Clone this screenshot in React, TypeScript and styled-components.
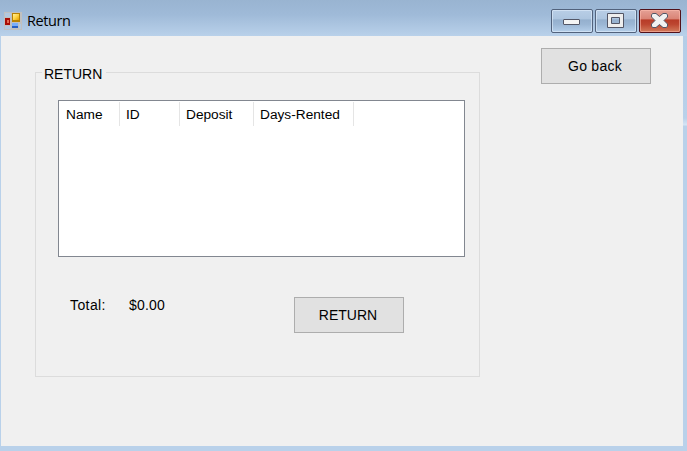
import React from "react";
import styled, { createGlobalStyle } from "styled-components";

const GlobalStyle = createGlobalStyle`
  html, body { margin: 0; padding: 0; }
  body { overflow: hidden; }
  *, *::before, *::after { box-sizing: border-box; }
`;

const Window = styled.div`
  width: 687px;
  height: 451px;
  display: grid;
  grid-template-rows: 36px 410px 5px;
  background: #b9d1ea;
  color: #000;
  font: 14px/18px "Liberation Sans", Arial, sans-serif;
`;

const TitleBar = styled.header`
  display: flex;
  align-items: flex-start;
  padding: 9px 6px 0 4px;
  background: linear-gradient(#99b4d1, #9fbad8 40%, #b9d1ea);
`;

const AppIcon = styled.svg`
  width: 18px;
  height: 18px;
  margin-top: 3px;
`;

const Title = styled.h1`
  flex: 1;
  margin: 2px 0 0 5px;
  font: 400 14.5px/20px "Open Sans", sans-serif;
  letter-spacing: -0.4px;
`;

const Controls = styled.div`
  display: flex;
  gap: 2px;
`;

const ControlButton = styled.button<{ $danger?: boolean }>`
  width: 42px;
  height: 24px;
  padding: 0;
  border: 1px solid ${(p) => (p.$danger ? "#51111a" : "#52627c")};
  border-radius: 2px;
  box-shadow: inset 0 0 0 1px ${(p) => (p.$danger ? "rgba(255,190,175,.55)" : "rgba(225,238,252,.6)")};
  background: ${(p) =>
    p.$danger
      ? "linear-gradient(#e5a196, #d98274 42%, #b73b27 44%, #bd4630 65%, #d27b5c)"
      : "linear-gradient(#b9cee6, #adc5df 42%, #94afcd 44%, #9bb6d4 65%, #b5cfea)"};

  svg {
    display: block;
    width: 40px;
    height: 22px;
  }
`;

const Body = styled.div`
  display: flex;
  border-left: 1px solid #b9d1ea;
  background: linear-gradient(#b4cde7, #b9d1ea 20%, #d6e5f5 89px, #b9d1ea 90px);
`;

const Client = styled.main`
  width: 682px;
  display: flex;
  align-items: flex-start;
  gap: 61px;
  padding: 12px 0 0 34px;
  background: #f0f0f0;
`;

const GroupBox = styled.section`
  width: 445px;
  height: 305px;
  margin-top: 24px;
  padding-left: 22px;
  border: 1px solid #dcdcdc;
`;

const GroupTitle = styled.h2`
  width: 64px;
  height: 18px;
  margin: -8px 0 0 -16px;
  padding-left: 2px;
  background: #f0f0f0;
  font: 400 14px/18px "Liberation Sans", Arial, sans-serif;
`;

const ListView = styled.div`
  width: 407px;
  height: 157px;
  margin-top: 17px;
  padding-top: 1px;
  border: 1px solid #828790;
  background: #fff;
`;

const HeaderRow = styled.div`
  display: flex;
  height: 24px;
`;

const HeaderCell = styled.div<{ $width: number }>`
  width: ${(p) => p.$width}px;
  padding-left: 6px;
  border-right: 1px solid #e5e5e5;
  line-height: 25px;
  font-size: 13.7px;

  &:first-child {
    padding-left: 7px;
  }
`;

const Summary = styled.div`
  display: flex;
  align-items: flex-start;
  margin-top: 40px;
  padding-left: 12px;
`;

const SummaryText = styled.span<{ $width: number; $spacing: number }>`
  width: ${(p) => p.$width}px;
  margin-top: -1px;
  line-height: 18px;
  letter-spacing: ${(p) => p.$spacing}px;
`;

const ActionButton = styled.button<{ $spacing?: number }>`
  width: 110px;
  height: 36px;
  padding: 0 2px 0 0;
  border: 1px solid #adadad;
  background: #e1e1e1;
  color: #000;
  font: 14px/18px "Liberation Sans", Arial, sans-serif;
  letter-spacing: ${(p) => p.$spacing ?? 0}px;
`;

const columns = [
  { label: "Name", width: 61 },
  { label: "ID", width: 60 },
  { label: "Deposit", width: 74 },
  { label: "Days-Rented", width: 100 },
];

export default function App() {
  return (
    <>
      <GlobalStyle />
      <Window>
        <TitleBar>
          <AppIcon viewBox="0 0 18 18" aria-hidden="true">
            <defs>
              <linearGradient id="gold" x2="1" y2="1">
                <stop stopColor="#fff0a0" />
                <stop offset=".5" stopColor="#ffd445" />
                <stop offset="1" stopColor="#e4a000" />
              </linearGradient>
            </defs>
            <path fill="#c0c0c0" d="M0 0h18v18H0z" />
            <path fill="#b2c8df" d="M1 1h6v4H1zM1 14h6v3H1zM15 12h2v5h-2z" />
            <path fill="#a80d05" d="M1 6h5v7H1z" />
            <path fill="#e66a51" d="M3 8h2v3H3z" />
            <path fill="#b98100" d="M8 1h8v9H8z" />
            <path fill="url(#gold)" d="M9 2h6v6H9z" />
            <path fill="#2860c4" d="M8 11h6v5H8z" />
            <path fill="#78adfa" d="M8 11h6v3H8z" />
          </AppIcon>
          <Title>Return</Title>
          <Controls>
            <ControlButton aria-label="Minimize">
              <svg viewBox="0 0 40 22">
                <rect x="11.5" y="9.5" width="16" height="5" rx=".5" fill="#f4f4f4" stroke="#535666" />
              </svg>
            </ControlButton>
            <ControlButton aria-label="Maximize">
              <svg viewBox="0 0 40 22">
                <path
                  d="M11.5 3.5h16v14h-16zM15.5 7.5v6h8v-6z"
                  fill="#eeeeee"
                  fillRule="evenodd"
                  stroke="#535666"
                />
              </svg>
            </ControlButton>
            <ControlButton aria-label="Close" $danger>
              <svg viewBox="0 0 40 22">
                <path
                  d="M12.5 3.5h3.5l3.5 3 3.5-3h3.5l1 1.5v2l-3.5 3.5 3.5 3.5v2l-1 1.5H23l-3.5-3-3.5 3h-3.5l-1-1.5v-2l3.5-3.5-3.5-3.5v-2z"
                  fill="#f1f1f1"
                  stroke="#535666"
                  strokeLinejoin="round"
                />
              </svg>
            </ControlButton>
          </Controls>
        </TitleBar>
        <Body>
          <Client>
            <GroupBox>
              <GroupTitle>RETURN</GroupTitle>
              <ListView>
                <HeaderRow>
                  {columns.map((column) => (
                    <HeaderCell key={column.label} $width={column.width}>
                      {column.label}
                    </HeaderCell>
                  ))}
                </HeaderRow>
              </ListView>
              <Summary>
                <SummaryText $width={59} $spacing={0.4}>Total:</SummaryText>
                <SummaryText $width={165} $spacing={0.2}>$0.00</SummaryText>
                <ActionButton>RETURN</ActionButton>
              </Summary>
            </GroupBox>
            <ActionButton $spacing={0.25}>Go back</ActionButton>
          </Client>
        </Body>
      </Window>
    </>
  );
}
